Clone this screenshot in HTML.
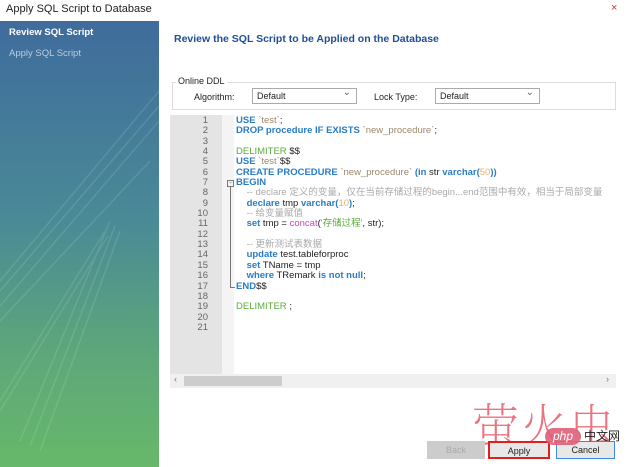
<!DOCTYPE html>
<html><head><meta charset="utf-8"><style>
*{margin:0;padding:0;box-sizing:border-box}
body{width:636px;height:467px;background:#fff;font-family:"Liberation Sans","Noto Sans CJK SC",sans-serif;position:relative;overflow:hidden;font-size:10px;color:#222}
.abs{position:absolute}
#side{left:0;top:21px;width:159px;height:446px;background:linear-gradient(180deg,#3f6c9c 0%,#4a8a96 45%,#5ea77a 75%,#67b86a 100%)}
.code{font-family:"Liberation Sans","Noto Sans CJK SC",sans-serif;font-size:9.5px;line-height:10.35px;white-space:pre}
.k{color:#2a7dc4;font-weight:bold}
.g{color:#5aab3c}
.s{color:#9a8a6a}
.c{color:#aaa}
.n{color:#f0b060}
.p{color:#d040c0}
.sel{position:absolute;height:16px;border:1px solid #aaa;background:#fff;font-size:9px;padding:2px 4px}
.sel:after{content:"⌄";position:absolute;right:5px;top:-2px;color:#666;font-size:10px}
.btn{position:absolute;top:441px;height:18px;font-size:9px;text-align:center;line-height:16px;border:1px solid #adadad;background:#e1e1e1}
</style></head><body>
<div class="abs" style="left:6px;top:3px;font-size:11px;color:#222">Apply SQL Script to Database</div>
<div class="abs" style="left:611px;top:2px;color:#c33;font-size:11px">×</div>
<div id="side" class="abs">
<svg width="159" height="446" style="position:absolute;left:0;top:0;opacity:.12">
<g stroke="#dfe" stroke-width="1.5" fill="none">
<path d="M0 260 L159 70 M0 270 L159 85 M0 285 L159 100 M0 300 L150 140 M20 420 L110 200 M30 425 L115 205 M40 430 L120 210 M0 380 L105 210 M0 390 L108 215"/>
</g></svg>
<div class="abs" style="left:9px;top:6px;color:#fff;font-weight:bold;font-size:9.5px">Review SQL Script</div>
<div class="abs" style="left:9px;top:27px;color:#b9cde0;font-size:9.5px">Apply SQL Script</div>
</div>
<div class="abs" style="left:174px;top:33px;color:#1e4f96;font-weight:bold;font-size:10.5px">Review the SQL Script to be Applied on the Database</div>
<div class="abs" style="left:172px;top:82px;width:444px;height:28px;border:1px solid #ddd"></div>
<div class="abs" style="left:176px;top:76px;background:#fff;padding:0 2px;font-size:9px">Online DDL</div>
<div class="abs" style="left:194px;top:92px;font-size:9px">Algorithm:</div>
<div class="sel" style="left:252px;top:88px;width:105px">Default</div>
<div class="abs" style="left:374px;top:92px;font-size:9px">Lock Type:</div>
<div class="sel" style="left:435px;top:88px;width:105px">Default</div>
<div class="abs" style="left:170px;top:115px;width:446px;height:273px;background:#fff"></div>
<div class="abs" style="left:170px;top:115px;width:52px;height:259px;background:#e4e4e4"></div>
<div class="abs" style="left:222px;top:115px;width:12px;height:259px;background:#f4f4f4"></div>
<div class="abs code" style="left:170px;top:116px;width:38px;text-align:right;color:#666">1
2
3
4
5
6
7
8
9
10
11
12
13
14
15
16
17
18
19
20
21</div>
<div class="abs" style="left:227px;top:180px;width:7px;height:7px;border:1px solid #777;font-size:7px;line-height:5px;text-align:center;color:#555">-</div>
<div class="abs" style="left:230px;top:187px;width:5px;height:101px;border-left:1px solid #777;border-bottom:1px solid #777"></div>
<div class="abs code" style="left:236px;top:116px"><span class="k">USE</span> <span class="s">`test`</span>;
<span class="k">DROP procedure IF EXISTS</span> <span class="s">`new_procedure`</span>;

<span class="g">DELIMITER</span> $$
<span class="k">USE</span> <span class="s">`test`</span>$$
<span class="k">CREATE PROCEDURE</span> <span class="s">`new_procedure`</span> <span class="k">(in</span> str <span class="k">varchar(</span><span class="n">50</span><span class="k">))</span>
<span class="k">BEGIN</span>
    <span class="c">-- declare 定义的变量，仅在当前存储过程的begin...end范围中有效，相当于局部变量</span>
    <span class="k">declare</span> tmp <span class="k">varchar(</span><span class="n">10</span><span class="k">)</span>;
    <span class="c">-- 给变量赋值</span>
    <span class="k">set</span> tmp = <span class="p">concat</span>(<span class="g">'存储过程'</span>, str);

    <span class="c">-- 更新测试表数据</span>
    <span class="k">update</span> test.tableforproc
    <span class="k">set</span> TName = tmp
    <span class="k">where</span> TRemark <span class="k">is not null</span>;
<span class="k">END</span>$$

<span class="g">DELIMITER</span> ;</div>
<div class="abs" style="left:170px;top:374px;width:446px;height:14px;background:#f0f0f0"></div>
<div class="abs" style="left:184px;top:376px;width:98px;height:10px;background:#cdcdcd"></div>
<div class="abs" style="left:174px;top:374px;font-size:9px;color:#777">‹</div>
<div class="abs" style="left:606px;top:374px;font-size:9px;color:#777">›</div>
<div class="abs" style="left:472px;top:400px;color:#e85a6a;font-size:47px;line-height:1;font-family:'Noto Serif CJK SC',serif;font-weight:200;opacity:.85;letter-spacing:1px">萤火虫</div>
<div class="btn" style="left:427px;width:58px;color:#aaa;background:#ccc;border-color:#ccc">Back</div>
<div class="btn" style="left:488px;width:62px;border:2px solid #e02020;background:#e8e8e8">Apply</div>
<div class="btn" style="left:556px;width:59px;border:1px solid #3d8be0;background:#e8e8e8">Cancel</div>
<div class="abs" style="left:545px;top:428px;width:36px;height:17px;border-radius:9px;background:#e0607a;color:#fff;font-size:12px;text-align:center;line-height:16px;font-style:italic;opacity:.9">php</div>
<div class="abs" style="left:584px;top:430px;font-size:12px;line-height:1;color:#222">中文网</div>
</body></html>
